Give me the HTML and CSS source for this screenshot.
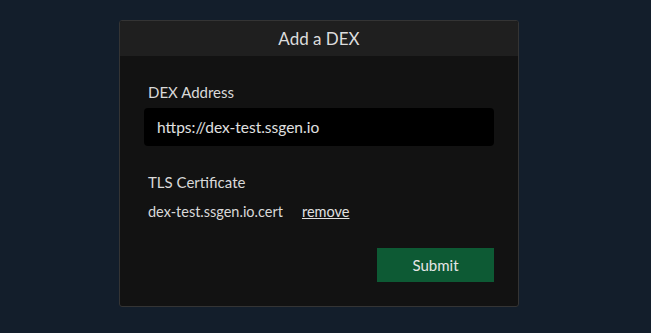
FILE: index.html
```html
<!DOCTYPE html>
<html lang="en">
  <head>
    <meta charset="UTF-8" />
    <meta name="viewport" content="width=device-width, initial-scale=1.0" />
    <title>Add a DEX</title>
    <link rel="stylesheet" href="styles.css">
  </head>
  <body>
    <div class="card">
      <div class="card-head">Add a DEX</div>
      <form class="card-body">
        <!-- address -->
        <div class="field">
          <label for="addr" class="label">DEX Address</label>
          <input type="text" id="addr" class="input" value="https://dex-test.ssgen.io" />
        </div>
        <!-- certificate -->
        <div class="field cert">
          <span class="label">TLS Certificate</span>
          <div class="cert-row">
            <span class="cert-name">dex-test.ssgen.io.cert</span>
            <a href="#" class="remove">remove</a>
          </div>
        </div>
        <div class="actions">
          <button type="button" class="submit">Submit</button>
        </div>
      </form>
    </div>
  </body>
</html>
```

FILE: styles.css
```css
* {
  padding: 0;
  margin: 0;
  box-sizing: border-box;
}
body {
  background: #131e2b;
  font-family: "Lato", "Noto Sans", sans-serif;
  color: #d9d9d9;
  padding-top: 20px;
}
.card {
  width: 400px;
  margin-left: 119px;
  border: 1px solid #343434;
  border-radius: 3px;
  background: #121212;
  overflow: hidden;
}
.card-head {
  height: 35px;
  background: #1f1f1f;
  text-align: center;
  font-size: 17px;
  line-height: 35px;
  color: #dcdcdc;
}
.card-body {
  padding: 26px 24px 24px;
  display: flex;
  flex-direction: column;
}
.field {
  display: flex;
  flex-direction: column;
}
.label {
  font-size: 15px;
  line-height: 20px;
  padding-left: 4px;
  margin-bottom: 6px;
}
.input {
  height: 38px;
  background: #000;
  border: none;
  border-radius: 4px;
  color: #e0e0e0;
  font-family: inherit;
  font-size: 15.5px;
  padding: 0 13px;
}
.input:focus {
  outline: none;
}
.cert {
  margin-top: 26px;
}
.cert .label {
  margin-bottom: 10px;
}
.cert-row {
  padding-left: 4px;
  font-size: 14.5px;
  line-height: 20px;
  display: flex;
  gap: 19px;
}
.remove {
  color: #e0e0e0;
}
.actions {
  display: flex;
  justify-content: flex-end;
  margin-top: 26px;
}
.submit {
  width: 117px;
  height: 34px;
  background: #0d5a34;
  border: none;
  color: #e6e6e6;
  font-family: inherit;
  font-size: 15px;
}
```
